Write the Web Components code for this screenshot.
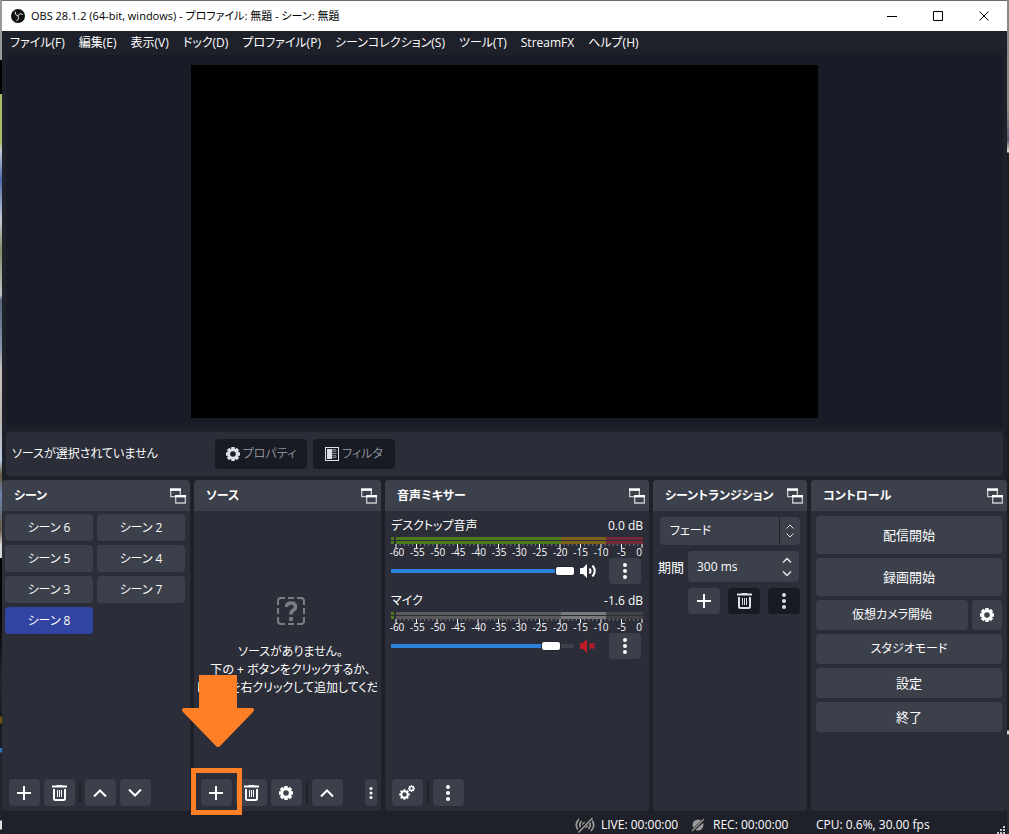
<!DOCTYPE html>
<html lang="ja">
<head>
<meta charset="utf-8">
<title>OBS 28.1.2</title>
<style>
html, body { margin: 0; height: 100%; }
body {
  box-sizing: border-box;
  min-height: 100vh;
  display: flex;
  padding: 1px 2px 0;
  font: 12px/18px "Open Sans", "Noto Sans CJK JP", sans-serif;
  font-feature-settings: "palt", "kern";
  color: #fefefe;
  background:
    linear-gradient(#9a9a9a 0 60px, #000 60px 94px, #a9bd68 94px 142px, #c6cbd6 150px, #4f69ad 180px, #c4ccd2 220px, #7f8f6a 250px, #c0c4c4 295px, #56647a 300px, #8a98ac 350px, #c9c2bc 370px, #bdb6b0 420px, #b9cbe0 460px, #6a5a3c 475px, #6c86b4 495px, #6a5c44 530px, #d8d8d8 545px 558px, #050608 558px 620px, #23262e 680px, #1b1d22 716px, #6b5310 717px 723px, #1b1d22 724px 748px, #2a74c0 748px 752px, #22252c 753px 820px, #e0e0e0 821px 829px, #222 830px) left / 2px 100% no-repeat,
    linear-gradient(#8a8a8a 0 110px, #4f5566 140px, #d0d0c8 150px 152px, #1c1e22 153px 730px, #d0d0d0 731px 734px, #2a2c31 735px) right / 2px 100% no-repeat,
    #6b6a6c;
}
</style>
</head>
<body>
<obs-window></obs-window>

<script>
const ICONS = {
  plus: [14, 14, '<path d="M7 0v14M0 7h14" stroke="currentColor" stroke-width="2" fill="none"/>'],
  trash: [15, 16, '<path d="M0 1.5h15M4.500 .5h6" stroke="currentColor" stroke-width="1.800" fill="none"/><path d="M2 4v9.500Q2 15 3.500 15h8Q13 15 13 13.500V4" stroke="currentColor" stroke-width="2" fill="none"/><path d="M5.500 5v7M7.500 5v7M9.500 5v7" stroke="currentColor" fill="none"/>'],
  up: [14, 8, '<path d="M1 7.500l6-6 6 6" stroke="currentColor" stroke-width="2" fill="none"/>'],
  down: [14, 8, '<path d="M1 .5l6 6 6-6" stroke="currentColor" stroke-width="2" fill="none"/>'],
  dots: [4, 16, '<circle cx="2" cy="2" r="2"/><circle cx="2" cy="8" r="2"/><circle cx="2" cy="14" r="2"/>'],
  smalldots: [4, 12, '<circle cx="2" cy="1.500" r="1.500"/><circle cx="2" cy="6" r="1.500"/><circle cx="2" cy="10.500" r="1.500"/>'],
  gear: [14, 14, '<circle cx="7" cy="7" r="4.300" fill="none" stroke="currentColor" stroke-width="3"/><g stroke="currentColor" stroke-width="3.400"><path d="M7 0v2.500M7 11.500V14M0 7h2.500M11.500 7H14M2 2l1.700 1.700M10.300 10.300L12 12M2 12l1.700-1.700M10.300 3.700L12 2"/></g>'],
  gears: [16, 15, '<g fill="none" stroke="currentColor"><circle cx="5.500" cy="9.500" r="3.200" stroke-width="2"/><path stroke-width="2" d="M5.500 4.200v2M5.500 12.800v2M.2 9.500h2M8.800 9.500h2M1.800 5.800l1.400 1.400M7.800 11.800l1.400 1.400M1.800 13.200l1.400-1.400M7.800 7.200l1.400-1.400"/><circle cx="12.500" cy="3.500" r="1.900" stroke-width="1.300"/><path stroke-width="1.300" d="M12.500 0v1.600M12.500 5.400V7M9 3.500h1.600M14.400 3.500H16M10.100 1.100l1 1M13.900 4.900l1 1M10.100 5.900l1-1M13.900 2.100l1-1"/></g>'],
  popout: [16, 16, '<g fill="none" stroke="#c9cace" stroke-width="1.300"><path d="M5 8.700H.7V2h9.600v5"/><path d="M0 1.500h11" stroke="#fff" stroke-width="2.400"/><path d="M5.700 8v7h9.600V8z"/><path d="M5 8.200h11" stroke="#fff" stroke-width="2.400"/></g>'],
  filter: [14, 14, '<rect x=".5" y=".5" width="13" height="13" fill="none" stroke="currentColor"/><path d="M2 2h5v10H2z"/><path d="M8 2v10M10 2v10" stroke="currentColor" stroke-dasharray="1 1" fill="none"/><path d="M9 3v9M11 3v9" stroke="currentColor" stroke-dasharray="1 2" fill="none" opacity=".6"/>'],
  speaker: [18, 14, '<path d="M0 4h3l4-4v14l-4-4H0z"/><path d="M9.500 4.500q2 2.500 0 5" fill="none" stroke="currentColor" stroke-width="2"/><path d="M12.500 1.500q4.500 5.500 0 11" fill="none" stroke="currentColor" stroke-width="2"/>'],
  muted: [18, 14, '<path d="M0 4h3l4-4v14l-4-4H0z"/><path d="M9.500 4.500l5 5M14.500 4.500l-5 5" stroke="currentColor" stroke-width="2" fill="none"/>'],
  unknown: [28, 28, '<path d="M1 8V4q0-3 3-3h4M20 1h4q3 0 3 3v4M27 20v4q0 3-3 3h-4M8 27H4q-3 0-3-3v-4M11 1h6M11 27h6M1 11v6M27 11v6" fill="none" stroke="currentColor" stroke-width="2"/><path d="M9.500 10q0-4 4.500-4t4.500 3.800q0 2.200-2.300 3.500Q14 14.500 14 17.500" fill="none" stroke="currentColor" stroke-width="3.600"/><circle cx="14" cy="22" r="2.200"/>'],
  live: [20, 16, '<g fill="none" stroke="currentColor" stroke-width="1.700"><path d="M4 2Q-1.500 8 4 14M6.500 4Q3 8 6.500 12M16 2q5.500 6 0 12M13.500 4q3.500 4 0 8"/></g><circle cx="10" cy="8" r="3"/><path d="M3 15L17 1" stroke="#1f212a" stroke-width="3.500"/><path d="M3.500 15.500L17.500 1" stroke="currentColor" stroke-width="1.500"/>'],
  rec: [14, 14, '<circle cx="7" cy="7" r="5.500"/><path d="M0 14L14 1" stroke="#1f212a" stroke-width="3"/><path d="M1 13L13 1" stroke="currentColor" stroke-width="1.300"/>'],
  logo: [14, 14, '<circle cx="7" cy="7" r="7" fill="#111"/><g fill="none" stroke="#e8e8e8" stroke-width="1"><path d="M4 2.500q0 4 3 4.500M11.800 5.500q-3.500-2-4.800 1.500M5.500 12q3.500-2 1.500-5"/></g>'],
  minimize: [10, 10, '<path d="M0 5.500h10" stroke="currentColor"/>'],
  maximize: [10, 10, '<path d="M.5.500h9v9h-9z" fill="none" stroke="currentColor"/>'],
  close: [10, 10, '<path d="M.5.500l9 9M9.500.500l-9 9" stroke="currentColor"/>'],
  grip: [9, 8, '<path d="M6 0h2v2H6zM3 3h2v2H3zM6 3h2v2H6zM0 6h2v2H0zM3 6h2v2H3zM6 6h2v2H6z" fill="#c8c8c8"/>']
};

class Base extends HTMLElement {
  render(css, html) {
    const t = document.createElement('template');
    t.innerHTML = `<style>*{box-sizing:border-box}${css}</style>${html}`;
    this.attachShadow({ mode: 'open' }).append(t.content.cloneNode(true));
  }
}

customElements.define('obs-icon', class extends Base {
  connectedCallback() {
    if (this.shadowRoot) return;
    const [w, h, body] = ICONS[this.getAttribute('name')];
    this.render(`:host{display:block;flex:none} svg{display:block}`,
      `<svg width="${w}" height="${h}" viewBox="0 0 ${w} ${h}" fill="currentColor" aria-hidden="true">${body}</svg>`);
  }
});

customElements.define('obs-button', class extends Base {
  connectedCallback() {
    if (this.shadowRoot) return;
    const icon = this.getAttribute('icon');
    const label = this.getAttribute('label');
    this.render(`
      :host{display:block;height:27px}
      button{width:100%;height:100%;display:flex;align-items:center;justify-content:center;gap:3px;
        margin:0;padding:0;border:0;border-radius:4px;background:#3c404b;color:inherit;
        font:inherit;font-feature-settings:inherit;white-space:nowrap}
      :host([kind=tool]) button{color:#fff;justify-content:flex-start;padding-left:8px}
      :host([kind=tool][icon=dots]) button{padding-left:13px}
      :host([kind=tool][icon=gears]) button{padding-left:7px}
      :host([kind=tool]){width:31px}
      :host([kind=small]){width:12px}
      :host([kind=wide]){width:32px;height:26px}
      :host([kind=bar]){height:30px}
      :host([kind=bar]) button{color:#8d8f98}
      :host([kind=bar]) obs-icon{color:#dcdfea}
      :host([kind=tall]){height:38px;font-size:13px}
      :host([kind=row]){height:30px}
      :host([large]){font-size:13px}
      :host([dark]) button{background:#181a24;}
      :host([dark][kind=wide]) button{color:#dcdfea}
      :host([selected]) button{background:#3244a2}`,
      `<button type="button"${label ? ` aria-label="${label}"` : ''}>${icon ? `<obs-icon name="${icon}"></obs-icon>` : ''}<slot></slot></button>`);
  }
});

customElements.define('obs-title-bar', class extends Base {
  connectedCallback() {
    this.render(`
      :host{display:flex;align-items:center;height:30px;background:#fff;color:#000;font-size:11px}
      obs-icon{margin-right:6px}
      .logo{margin-left:9px}
      span{flex:1;white-space:nowrap}
      button{width:46px;height:30px;border:0;padding:0;background:none;color:#000;display:grid;place-items:center}
      button obs-icon{margin:0}`,
      `<obs-icon class="logo" name="logo"></obs-icon><span><slot></slot></span>
       <button aria-label="最小化"><obs-icon name="minimize"></obs-icon></button>
       <button aria-label="最大化"><obs-icon name="maximize"></obs-icon></button>
       <button aria-label="閉じる"><obs-icon name="close"></obs-icon></button>`);
  }
});

customElements.define('obs-menu-bar', class extends Base {
  connectedCallback() {
    const items = ['ファイル(F)', '編集(E)', '表示(V)', 'ドック(D)', 'プロファイル(P)', 'シーンコレクション(S)', 'ツール(T)', 'StreamFX', 'ヘルプ(H)'];
    this.render(`
      :host{display:flex;align-items:center;gap:14px;height:24px;padding:0 8px;background:#1f212a}
      button{border:0;padding:0;background:none;color:inherit;font:inherit;font-feature-settings:inherit;white-space:nowrap}`,
      items.map(i => `<button type="button">${i}</button>`).join(''));
  }
});

customElements.define('obs-preview', class extends Base {
  connectedCallback() {
    this.render(`
      :host{display:flex;justify-content:center;padding:10px;margin:0 4px;background:#191b26;min-height:0}
      div{height:100%;aspect-ratio:16/9;background:#000}`, `<div role="img" aria-label="プレビュー"></div>`);
  }
});

customElements.define('obs-context-bar', class extends Base {
  connectedCallback() {
    this.render(`
      :host{display:flex;align-items:center;gap:6px;height:44px;margin:4px;padding:0 6px;border-radius:4px;background:#2b2d38}
      span{width:197px;white-space:nowrap}
      .a{width:92px}.b{width:82px}`,
      `<span>ソースが選択されていません</span>
       <obs-button class="a" kind="bar" dark icon="gear">プロパティ</obs-button>
       <obs-button class="b" kind="bar" dark icon="filter">フィルタ</obs-button>`);
  }
});

customElements.define('obs-dock', class extends Base {
  connectedCallback() {
    this.render(`
      :host{display:flex;flex-direction:column;min-width:0;border-radius:4px;background:#2b2d38}
      header{display:flex;align-items:center;justify-content:space-between;height:31px;padding:0 4px 0 12px;
        border-radius:4px 4px 0 0;background:#3c404b}
      h2{margin:0;font-size:12px;font-weight:700;white-space:nowrap}
      button{border:0;padding:0;background:none}
      .body{flex:1;min-height:0;display:flex;flex-direction:column}
      .tools{display:flex;align-items:center;gap:4px;padding:0 4px 5px 7px}
      ::slotted(i[slot=tools]){width:2px;height:21px;background:#1f212a}
      ::slotted(.end){margin-left:auto}`,
      `<header><h2>${this.getAttribute('heading')}</h2><button type="button" aria-label="切り離す"><obs-icon name="popout"></obs-icon></button></header>
       <div class="body"><slot></slot></div><div class="tools"><slot name="tools"></slot></div>`);
  }
});

customElements.define('obs-scene-grid', class extends Base {
  connectedCallback() {
    this.render(`:host{display:grid;grid-template-columns:1fr 1fr;gap:4px;padding:3px 5px 3px 3px}`,
      [6, 2, 5, 4, 3, 7, 8].map(n => `<obs-button${n === 8 ? ' selected' : ''}>シーン ${n}</obs-button>`).join(''));
  }
});

customElements.define('obs-empty-sources', class extends Base {
  connectedCallback() {
    this.render(`
      :host{flex:1;display:flex;flex-direction:column;align-items:center;justify-content:center;gap:18px;margin:0 4px;padding:4px 0 0 6px;overflow:hidden}
      obs-icon{color:#7b7d84}
      p{margin:0;text-align:center;white-space:nowrap}`,
      `<obs-icon name="unknown"></obs-icon><p>ソースがありません。<br>下の + ボタンをクリックするか、<br>またはここを右クリックして追加してください。</p>`);
  }
});

/* Highlights the slotted control with a frame and an arrow above it. */
customElements.define('guide-callout', class extends Base {
  connectedCallback() {
    this.render(`
      :host{display:block;position:relative;z-index:2}
      .frame{position:absolute;left:-10px;top:-11px;width:51px;height:47px;border:5px solid #ff7f27;pointer-events:none}
      svg{position:absolute;left:-19px;top:-104px;pointer-events:none}`,
      `<slot></slot><div class="frame"></div>
       <svg width="72" height="73" viewBox="0 0 72 73" aria-hidden="true"><path fill="#ff7f27" d="M17 0h38v33h14q5 0 2 4L39 70q-3 4-6 0L1 37q-3-4 2-4h14z"/></svg>`);
  }
});

customElements.define('obs-channel', class extends Base {
  connectedCallback() {
    const muted = this.hasAttribute('muted');
    const name = this.getAttribute('name');
    const v = this.getAttribute('value');
    let ticks = '';
    for (let i = 0; i <= 60; i++) {
      const major = i % 5 === 0;
      ticks += `<line x1="${i / 60 * 100}%" x2="${i / 60 * 100}%" y1="0" y2="${major ? 4 : 2}" stroke="${major ? '#fff' : '#777a82'}"/>`;
    }
    const scale = [60, 55, 50, 45, 40, 35, 30, 25, 20, 15, 10, 5].map(n => `<span>-${n}</span>`).join('') + '<span>0</span>';
    this.render(`
      :host{display:block;height:75px;
        --m:linear-gradient(90deg,#4a7a1c 0 66.800%,#7d611c 66.800% 85%,#752a38 85%)}
      :host([muted]){--m:linear-gradient(90deg,#5b5b5d 0 66.800%,#7a7a7c 66.800% 85%,#434345 85%)}
      .head{display:flex;justify-content:space-between;height:22px;align-items:center}
      .bar{display:flex;gap:2px;height:3px;margin-bottom:1px}
      .bar i{width:3px;background:#4a7a1c}
      .bar b{flex:1;background:var(--m)}
      svg.t{display:block;height:4px;width:calc(100% - 6px);margin:-1px 0 0 5px;overflow:visible}
      .scale{display:flex;justify-content:space-between;font-size:10px;line-height:9px;height:10px;margin:0 1px 0 6px}
      .scale span{width:0;display:flex;justify-content:center}
      .scale span:last-child{justify-content:flex-end}
      .ctl{display:flex;align-items:center;height:26px}
      input{appearance:none;flex:1;min-width:0;height:12px;margin:0;background:
        linear-gradient(90deg,#2b82d9 ${v - 4}%,#3c404b 0) center/100% 4px no-repeat;border-radius:2px}
      input::-webkit-slider-thumb{appearance:none;width:18px;height:8px;border-radius:2px;background:#fff;box-shadow:0 0 0 1px #23252e}
      .mute{width:18px;height:14px;border:0;padding:0;margin:0 11px 0 6px;background:none;color:${muted ? '#c01c28' : '#fff'}}
      obs-button{margin-right:2px}`,
      `<div class="head"><label for="v">${name}</label><span>${this.getAttribute('level')} dB</span></div>
       <div class="bar"><i></i><b></b></div><div class="bar"><i></i><b></b></div>
       <svg class="t" aria-hidden="true">${ticks}</svg><div class="scale">${scale}</div>
       <div class="ctl"><input id="v" type="range" min="0" max="100" step="any" value="${v}">
       <button class="mute" type="button" aria-label="ミュート"><obs-icon name="${muted ? 'muted' : 'speaker'}"></obs-icon></button>
       <obs-button kind="wide" icon="dots" label="${name} メニュー"></obs-button></div>`);
  }
});

customElements.define('obs-transition', class extends Base {
  connectedCallback() {
    this.render(`
      :host{display:grid;gap:6px;padding:6px 7px 0 5px}
      .sel,.num{position:relative;display:flex}
      .sel{margin-left:2px}
      label{font-size:13px}
      select,input{appearance:none;width:100%;border:0;border-radius:4px;margin:0;background:#3c404b;color:inherit;font:inherit;font-feature-settings:inherit}
      select{height:28px;padding:0 30px 0 10px}
      input{height:31px;padding:0 24px 0 9px}
      .sel span{position:absolute;right:0;top:0;width:21px;height:28px;border-left:1px solid #1f212a;display:grid;place-content:center;pointer-events:none}
      .num span{position:absolute;right:7px;top:0;height:31px;display:grid;place-content:center;pointer-events:none}
      .row{display:grid;grid-template-columns:30px 1fr;align-items:center}
      .num{margin-right:1px}
      .btns{display:flex;justify-content:space-between;margin-left:30px}
      svg{display:block}`,
      `<div class="sel"><select aria-label="トランジション"><option>フェード</option></select>
        <span><svg width="8" height="14" viewBox="0 0 8 14" fill="none" stroke="#e4e5e8"><path d="M.5 4.500L4 1l3.500 3.500M.5 9.500L4 13l3.500-3.500"/></svg></span></div>
       <div class="row"><label for="d">期間</label><div class="num"><input id="d" value="300 ms">
        <span><svg width="10" height="20" viewBox="0 0 10 20" fill="none" stroke="#e4e5e8" stroke-width="1.500"><path d="M1 5.500l4-4 4 4M1 14.500l4 4 4-4"/></svg></span></div></div>
       <div class="btns"><obs-button kind="wide" icon="plus" label="追加"></obs-button>
        <obs-button kind="wide" dark icon="trash" label="削除"></obs-button>
        <obs-button kind="wide" dark icon="dots" label="メニュー"></obs-button></div>`);
  }
});

customElements.define('obs-controls', class extends Base {
  connectedCallback() {
    this.render(`:host{display:grid;gap:4px;padding:5px}
      .cam{display:grid;grid-template-columns:1fr 30px;gap:4px}`,
      `<obs-button kind="tall">配信開始</obs-button><obs-button kind="tall">録画開始</obs-button>
       <div class="cam"><obs-button kind="row">仮想カメラ開始</obs-button><obs-button kind="row" icon="gear" label="仮想カメラ設定"></obs-button></div>
       <obs-button kind="row">スタジオモード</obs-button><obs-button kind="row" large>設定</obs-button><obs-button kind="row" large>終了</obs-button>`);
  }
});

customElements.define('obs-status-bar', class extends Base {
  connectedCallback() {
    this.render(`
      :host{display:flex;align-items:center;justify-content:flex-end;height:23px;font-size:12px;white-space:nowrap;padding-top:4px}
      obs-icon{color:#9b9a97;margin-right:6px}
      .live{width:90px}.rec{width:103px}.cpu{width:187px}
      .rec-i{margin-right:8px}
      .grip{margin:0 1px 0 -6px;align-self:flex-end}`,
      `<obs-icon name="live"></obs-icon><span class="live">LIVE: 00:00:00</span>
       <obs-icon class="rec-i" name="rec"></obs-icon><span class="rec">REC: 00:00:00</span>
       <span class="cpu">CPU: 0.6%, 30.00 fps</span><obs-icon class="grip" name="grip"></obs-icon>`);
  }
});

customElements.define('obs-window', class extends Base {
  connectedCallback() {
    this.render(`
      :host{flex:1;min-width:0;display:flex;flex-direction:column;background:#1f212a}
      obs-preview{flex:353 1 0}
      .docks{flex:331 1 0;display:grid;gap:4px;
        grid-template-columns:minmax(0,188fr) minmax(0,187fr) minmax(0,264fr) minmax(0,154fr) minmax(0,196fr)}
      .mixer{padding:4px 6px}`,
      `<obs-title-bar>OBS 28.1.2 (64-bit, windows) - プロファイル: 無題 - シーン: 無題</obs-title-bar>
      <obs-menu-bar></obs-menu-bar>
      <obs-preview></obs-preview>
      <obs-context-bar></obs-context-bar>
      <div class="docks">
        <obs-dock heading="シーン"><obs-scene-grid></obs-scene-grid>
          <obs-button slot="tools" kind="tool" icon="plus" label="シーンを追加"></obs-button>
          <obs-button slot="tools" kind="tool" icon="trash" label="シーンを削除"></obs-button><i slot="tools"></i>
          <obs-button slot="tools" kind="tool" icon="up" label="上へ"></obs-button>
          <obs-button slot="tools" kind="tool" icon="down" label="下へ"></obs-button></obs-dock>
        <obs-dock heading="ソース"><obs-empty-sources></obs-empty-sources>
          <guide-callout slot="tools"><obs-button kind="tool" icon="plus" label="ソースを追加"></obs-button></guide-callout>
          <obs-button slot="tools" kind="tool" icon="trash" label="ソースを削除"></obs-button>
          <obs-button slot="tools" kind="tool" icon="gear" label="プロパティ"></obs-button><i slot="tools"></i>
          <obs-button slot="tools" kind="tool" icon="up" label="上へ"></obs-button>
          <obs-button slot="tools" class="end" kind="small" icon="smalldots" label="その他"></obs-button></obs-dock>
        <obs-dock heading="音声ミキサー"><div class="mixer">
            <obs-channel name="デスクトップ音声" level="0.0" value="100"></obs-channel>
            <obs-channel name="マイク" level="-1.6" value="91.5" muted></obs-channel></div>
          <obs-button slot="tools" kind="tool" icon="gears" label="詳細設定"></obs-button><i slot="tools"></i>
          <obs-button slot="tools" kind="tool" icon="dots" label="メニュー"></obs-button></obs-dock>
        <obs-dock heading="シーントランジション"><obs-transition></obs-transition></obs-dock>
        <obs-dock heading="コントロール"><obs-controls></obs-controls></obs-dock>
      </div>
      <obs-status-bar></obs-status-bar>`);
  }
});
</script>
</body>
</html>
